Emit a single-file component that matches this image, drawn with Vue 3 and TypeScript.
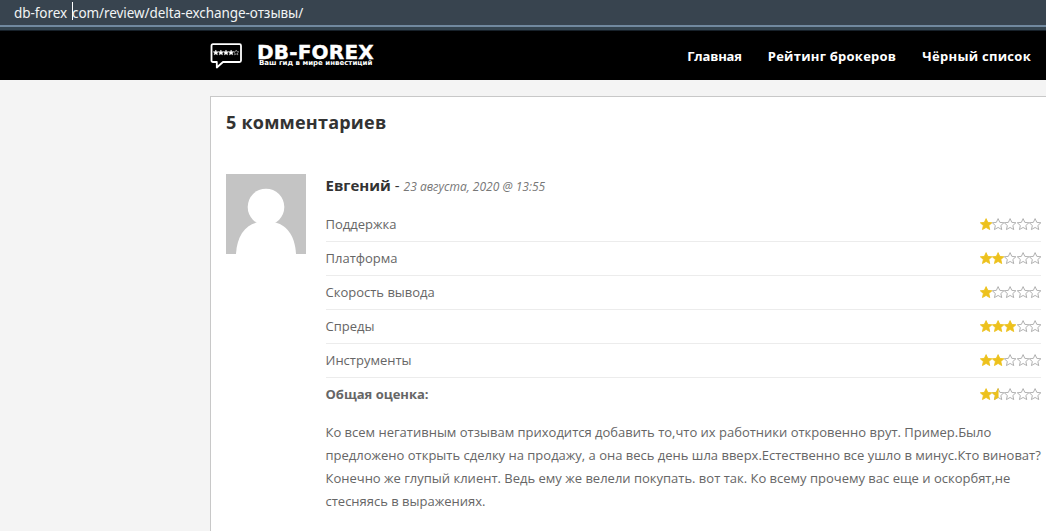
<script setup lang="ts">
interface Rating {
  label: string
  value: number
  total?: boolean
}

const menu = [
  { label: 'Главная', key: 'home' },
  { label: 'Рейтинг брокеров', key: 'brokers' },
  { label: 'Чёрный список', key: 'blacklist' },
]

const ratings: Rating[] = [
  { label: 'Поддержка', value: 1 },
  { label: 'Платформа', value: 2 },
  { label: 'Скорость вывода', value: 1 },
  { label: 'Спреды', value: 3 },
  { label: 'Инструменты', value: 2 },
  { label: 'Общая оценка:', value: 1.5, total: true },
]

const commentLines = [
  'Ко всем негативным отзывам приходится добавить то,что их работники откровенно врут. Пример.Было',
  'предложено открыть сделку на продажу, а она весь день шла вверх.Естественно все ушло в минус.Кто виноват?',
  'Конечно же глупый клиент. Ведь ему же велели покупать. вот так. Ко всему прочему вас еще и оскорбят,не',
  'стесняясь в выражениях.',
]

const starPath = 'M6 0.6L7.7 4.3L11.7 4.7L8.7 7.4L9.6 11.4L6 9.3L2.4 11.4L3.3 7.4L0.3 4.7L4.3 4.3Z'

const starState = (value: number, index: number) => {
  if (value >= index) return 'full'
  return value > index - 1 ? 'half' : 'empty'
}
</script>

<template>
  <div class="page">
    <div class="address-bar">
      <span>db-forex</span><span class="caret"></span><span>com/review/delta-exchange-отзывы/</span>
    </div>

    <header class="header">
      <div class="logo">
        <svg class="logo-icon" width="32" height="27" viewBox="0 0 32 27">
          <path d="M3 1.2H29.5Q31 1.2 31 2.7V17.5Q31 19 29.5 19H13L6.8 24.5V19H3Q1.5 19 1.5 17.5V2.7Q1.5 1.2 3 1.2Z" fill="none" stroke="#fff" stroke-width="1.8" stroke-linejoin="round" />
          <g v-for="i in 5" :key="i" :transform="`translate(${-2 + i * 5.1} 6.7) scale(0.45)`">
            <path :d="starPath" :fill="i < 5 ? '#fff' : 'none'" stroke="#fff" stroke-width="1" />
          </g>
        </svg>
        <div class="logo-text">
          <strong>DB-FOREX</strong>
          <small>Ваш гид в мире инвестиций</small>
        </div>
      </div>
      <nav class="menu">
        <a v-for="item in menu" :key="item.key" :class="item.key">{{ item.label }}</a>
      </nav>
    </header>

    <main class="comments">
      <h2>5 комментариев</h2>
      <article class="comment">
        <svg class="avatar" width="80" height="80" viewBox="0 0 80 80">
          <rect width="80" height="80" fill="#c4c4c4" />
          <circle cx="40" cy="33" r="18.3" fill="#fff" />
          <path d="M10 80C11 61 20 50 33 48H47C60 50 69 61 70 80Z" fill="#fff" />
        </svg>
        <div class="comment-body">
          <div class="author">
            <strong>Евгений</strong> <span>-</span> <time>23 августа, 2020 @ 13:55</time>
          </div>
          <div v-for="rating in ratings" :key="rating.label" class="rating" :class="{ total: rating.total }">
            <span>{{ rating.label }}</span>
            <div class="stars">
              <svg v-for="i in 5" :key="i" :class="starState(rating.value, i)" viewBox="0 0 12 12">
                <path class="outline" :d="starPath" />
                <path v-if="starState(rating.value, i) === 'half'" class="fill" d="M6 0.6V9.3L2.4 11.4L3.3 7.4L0.3 4.7L4.3 4.3Z" />
              </svg>
            </div>
          </div>
          <p class="text">
            <span v-for="line in commentLines" :key="line">{{ line }}</span>
          </p>
        </div>
      </article>
    </main>
  </div>
</template>

<style>
body {
  margin: 0;
  overflow: hidden;
}
</style>

<style scoped>
.page {
  width: 1046px;
  height: 531px;
  overflow: hidden;
  background: #f4f4f4;
  font-family: "Open Sans", "Noto Sans", sans-serif;
  font-size: 13px;
  color: #666;
}

.address-bar {
  display: flex;
  align-items: center;
  box-sizing: border-box;
  height: 31px;
  padding: 0 0 6px 14px;
  background: linear-gradient(#38444f 0 25px, #71899f 25px 27px, #354550 27px 30px, #17212a 30px);
  color: #f2f4f5;
  font-family: "Noto Sans", sans-serif;
  font-size: 13.5px;
  letter-spacing: -0.07px;
}

.caret {
  width: 1px;
  height: 18px;
  margin: 0 -1px 4px 5px;
  background: #fff;
}

.header {
  display: flex;
  justify-content: space-between;
  box-sizing: border-box;
  height: 49px;
  padding: 0 15px 0 210px;
  background: #000;
  color: #fff;
}

.logo {
  display: flex;
  padding-top: 12px;
}

.logo-icon {
  margin-right: 15px;
}

.logo-text {
  display: flex;
  flex-direction: column;
  padding-top: 1px;
  white-space: nowrap;
}

.logo-text strong {
  font: 700 20px/16px "DejaVu Sans", sans-serif;
  letter-spacing: 0.2px;
  -webkit-text-stroke: 0.4px #fff;
}

.logo-text small {
  margin-left: 2px;
  font: 700 7px/7px "DejaVu Sans", sans-serif;
}

.menu {
  display: flex;
  gap: 26px;
  font: 700 13px/51px "Open Sans", sans-serif;
  white-space: nowrap;
}

.home {
  letter-spacing: -0.2px;
}

.brokers {
  letter-spacing: 0.25px;
}

.blacklist {
  letter-spacing: 0.28px;
}

.comments {
  box-sizing: border-box;
  height: 460px;
  margin: 16px 0 0 210px;
  padding: 13px 5px 0 15px;
  border: solid #c8c8c8;
  border-width: 1px 0 0 1px;
  background: #fff;
}

h2 {
  margin: 0;
  color: #333;
  font: 700 18px/24px "Open Sans", sans-serif;
  letter-spacing: 0.22px;
}

.comment {
  display: flex;
  gap: 19.5px;
  margin-top: 40px;
}

.avatar {
  flex: none;
}

.comment-body {
  flex: 1;
  min-width: 0;
}

.author {
  height: 34px;
  line-height: 23px;
  color: #333;
  font-size: 15px;
  white-space: nowrap;
}

.author time {
  color: #777;
  font-size: 12px;
  font-style: italic;
}

.rating {
  display: flex;
  align-items: center;
  justify-content: space-between;
  box-sizing: border-box;
  height: 34px;
  border-bottom: 1px solid #ececec;
}

.rating > span {
  line-height: 18px;
  padding-bottom: 2px;
}

.rating.total {
  border-bottom-color: transparent;
  font-weight: 700;
}

.stars {
  display: flex;
  width: 61px;
}

.stars svg {
  width: 12.2px;
  height: 12.2px;
  overflow: visible;
}

.outline {
  fill: #fff;
  stroke: #aaa;
  stroke-width: 0.9;
}

.fill,
.full .outline {
  fill: #edc11c;
  stroke: #edc11c;
  stroke-width: 0.8;
}

.text {
  margin: 9px 0 0;
  line-height: 23px;
  letter-spacing: -0.005px;
  white-space: nowrap;
}

.text span {
  display: block;
}
</style>
